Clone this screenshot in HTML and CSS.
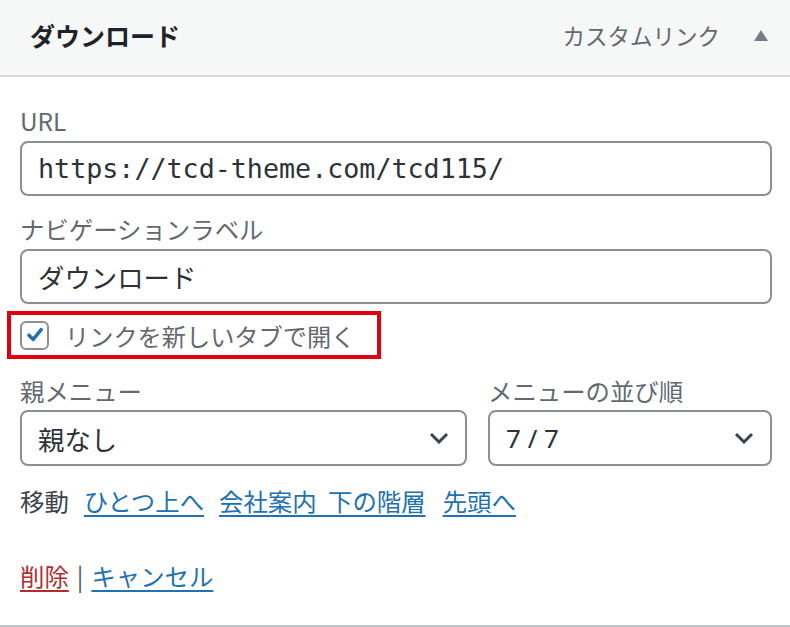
FILE: index.html
```html
<!DOCTYPE html>
<html lang="ja">
<head>
  <meta charset="UTF-8">
  <meta name="viewport" content="width=device-width, initial-scale=1.0">
  <title>メニュー項目</title>
  <link rel="stylesheet" href="styles.css">
</head>
<body>

  <div class="menu-item">
    <div class="item-bar">
      <span class="item-title">ダウンロード</span>
      <span class="item-controls">
        <span class="item-type">カスタムリンク</span>
        <span class="item-toggle"></span>
      </span>
    </div>

    <div class="item-settings">
      <label class="field-label" for="url">URL</label>
      <input class="field-input mono" type="text" id="url" value="https://tcd-theme.com/tcd115/">

      <label class="field-label gap" for="navLabel">ナビゲーションラベル</label>
      <input class="field-input" type="text" id="navLabel" value="ダウンロード">

      <label class="target-row">
        <span class="checkbox">
          <svg viewBox="0 0 20 20" width="22" height="22"><path d="M4.5 10.2 L8.4 14 L15.6 5.2" fill="none" stroke="#2271b1" stroke-width="3.2" stroke-linecap="round" stroke-linejoin="round"/></svg>
        </span>
        <span class="target-text">リンクを新しいタブで開く</span>
      </label>

      <div class="select-grid">
        <div>
          <div class="field-label">親メニュー</div>
          <div class="select-box">
            <span>親なし</span>
            <svg class="chevron" viewBox="0 0 20 12" width="20" height="12"><path d="M2 2 L10 10 L18 2" fill="none" stroke="#3c434a" stroke-width="3"/></svg>
          </div>
        </div>
        <div>
          <div class="field-label">メニューの並び順</div>
          <div class="select-box">
            <span class="order">7 / 7</span>
            <svg class="chevron" viewBox="0 0 20 12" width="20" height="12"><path d="M2 2 L10 10 L18 2" fill="none" stroke="#3c434a" stroke-width="3"/></svg>
          </div>
        </div>
      </div>

      <div class="move-row">
        <span class="move-label">移動</span>
        <a href="#">ひとつ上へ</a>
        <a href="#" class="wide">会社案内 下の階層</a>
        <a href="#">先頭へ</a>
      </div>

      <div class="actions">
        <a href="#" class="delete">削除</a><span class="sep">|</span><a href="#">キャンセル</a>
      </div>
    </div>
  </div>

</body>
</html>
```

FILE: styles.css
```css
* { box-sizing: border-box; }

body {
  margin: 0;
  background: #fff;
  font-family: "Noto Sans CJK JP", "Noto Sans", sans-serif;
  color: #3c434a;
}

.menu-item {
  width: 790px;
  border-bottom: 2px solid #c3c4c7;
}

.item-bar {
  height: 77px;
  display: flex;
  align-items: center;
  justify-content: space-between;
  padding: 0 22px 5px 30px;
  background: #f6f7f7;
  border-bottom: 2px solid #dcdcde;
}

.item-title {
  font-size: 25px;
  font-weight: 700;
  color: #1d2327;
}

.item-controls {
  display: flex;
  align-items: center;
  gap: 34px;
}

.item-type {
  font-size: 22.5px;
  color: #646970;
}

.item-toggle {
  width: 0;
  height: 0;
  border-left: 7px solid transparent;
  border-right: 7px solid transparent;
  border-bottom: 11px solid #787c82;
}

.item-settings {
  padding: 29px 18px 34px 20px;
}

.field-label {
  display: block;
  font-size: 24.4px;
  line-height: 30px;
  color: #646970;
}

.field-label.gap {
  margin-top: 18px;
}

.field-input {
  display: block;
  width: 100%;
  height: 55px;
  margin-top: 5px;
  padding: 0 16px;
  border: 2px solid #8c8f94;
  border-radius: 8px;
  font-family: "Noto Sans CJK JP", sans-serif;
  font-size: 26.4px;
  color: #2c3338;
  background: #fff;
  outline: none;
}

.field-input.mono {
  font-family: "DejaVu Sans Mono", "Liberation Mono", monospace;
  font-size: 26.7px;
}

.target-row {
  display: flex;
  align-items: center;
  width: fit-content;
  height: 48px;
  margin: 7px 0 0 -13px;
  padding: 0 22px 0 9px;
  border: 4px solid #e0000f;
}

.checkbox {
  width: 29px;
  height: 29px;
  display: flex;
  align-items: center;
  justify-content: center;
  border: 2px solid #8c8f94;
  border-radius: 6px;
  background: #fff;
}

.target-text {
  margin-left: 16px;
  font-size: 24.2px;
  color: #646970;
}

.select-grid {
  display: grid;
  grid-template-columns: 1fr 284px;
  column-gap: 21px;
  margin-top: 17px;
}

.select-box {
  display: flex;
  align-items: center;
  justify-content: space-between;
  height: 56px;
  margin-top: 4px;
  padding: 0 16px 0 16px;
  border: 2px solid #8c8f94;
  border-radius: 8px;
  font-size: 26.4px;
  color: #2c3338;
}

.select-box .order {
  font-family: "Noto Sans", sans-serif;
  font-size: 26px;
}

.move-row {
  display: flex;
  align-items: center;
  gap: 15px;
  margin-top: 20px;
  font-size: 24.4px;
  line-height: 30px;
}

.move-label {
  color: #3c434a;
}

.move-row .wide {
  white-space: nowrap;
  word-spacing: 6px;
}

.move-row a:last-child {
  margin-left: 2px;
}

a {
  color: #2271b1;
  text-decoration: underline;
  text-decoration-thickness: 2px;
  text-underline-offset: 4px;
}

.actions {
  margin-top: 45px;
  font-size: 24.4px;
  line-height: 30px;
}

.actions .delete {
  color: #b32d2e;
}

.sep {
  margin: 0 8px;
  color: #50575e;
}
```
